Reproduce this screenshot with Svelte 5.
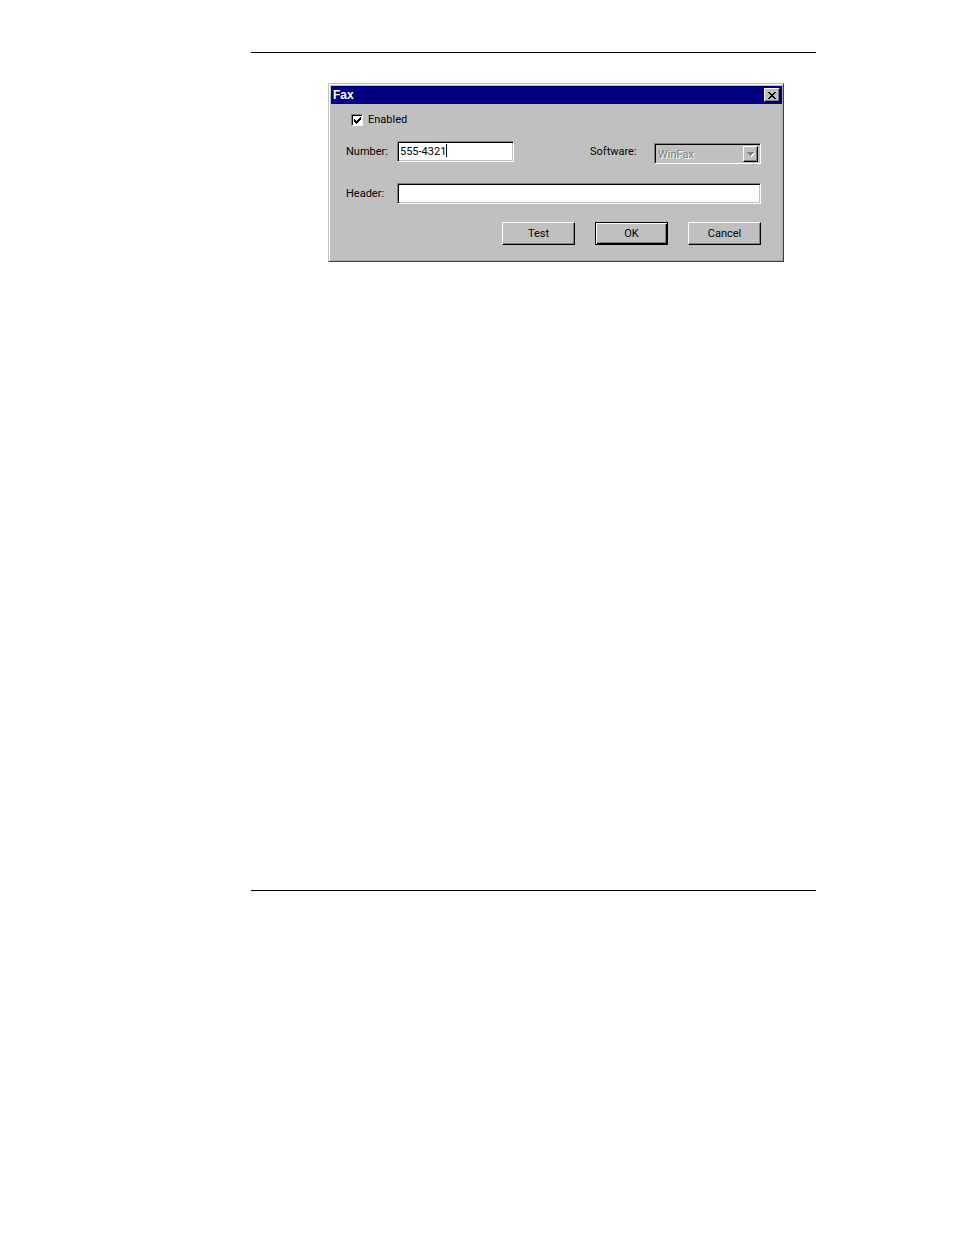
<script>
  let enabled = $state(true);
  let number = $state('555-4321');
  let software = $state('WinFax');
  let header = $state('');
</script>

<main class="sheet">
  <form class="dialog" aria-labelledby="dialog-title" onsubmit={(e) => e.preventDefault()}>
    <header class="titlebar">
      <h1 id="dialog-title">Fax</h1>
      <button type="button" class="close" aria-label="Close">
        <svg width="8" height="7" viewBox="0 0 8 7" shape-rendering="crispEdges" aria-hidden="true">
          <path d="M0 0h2v1h1v1h2v-1h1v-1h2v1h-1v1h-1v1h-1v1h1v1h1v1h1v1h-2v-1h-1v-1h-2v1h-1v1h-2v-1h1v-1h1v-1h1v-1h-1v-1h-1v-1h-1z" />
        </svg>
      </button>
    </header>

    <div class="body">
      <label class="check">
        <span class="box">
          <input type="checkbox" bind:checked={enabled} />
          {#if enabled}
            <svg width="7" height="7" viewBox="0 0 7 7" shape-rendering="crispEdges" aria-hidden="true">
              <path d="M0 2h1v1h1v1h1v-1h1v-1h1v-1h1v-1h1v3h-1v1h-1v1h-1v1h-1v1h-1v-1h-1v-1h-1z" />
            </svg>
          {/if}
        </span>
        Enabled
      </label>

      <div class="row">
        <label class="name" for="number">Number:</label>
        <div class="well number">
          <input id="number" type="text" bind:value={number} />
          <span class="caret"></span>
        </div>
        <label class="software" for="software">Software:</label>
        <div class="well combo">
          <select id="software" bind:value={software} disabled>
            <option>WinFax</option>
          </select>
          <span class="drop">
            <svg width="8" height="5" viewBox="0 0 8 5" shape-rendering="crispEdges" aria-hidden="true">
              <path fill="#fff" d="M1 1h7v1h-1v1h-1v1h-1v1h-1v-1h-1v-1h-1v-1h-1z" />
              <path fill="#808080" d="M0 0h7v1h-1v1h-1v1h-1v1h-1v-1h-1v-1h-1v-1h-1z" />
            </svg>
          </span>
        </div>
      </div>

      <div class="row heading">
        <label class="name" for="header">Header:</label>
        <div class="well wide">
          <input id="header" type="text" bind:value={header} />
        </div>
      </div>

      <div class="actions">
        <button type="button">Test</button>
        <button type="submit" class="default">OK</button>
        <button type="button">Cancel</button>
      </div>
    </div>
  </form>
</main>

<style>
  :global(body) {
    margin: 0;
    background: #fff;
  }

  .sheet,
  .sheet * {
    box-sizing: border-box;
  }

  .sheet {
    margin: 52px 138px 0 251px;
    min-height: 839px;
    padding: 30px 32px 30px 77px;
    border-top: 1px solid #000;
    border-bottom: 1px solid #000;
    font: 11px/16px Roboto, sans-serif;
    color: #000;
  }

  .dialog {
    border: 1px solid;
    border-color: #c0c0c0 #404040 #404040 #c0c0c0;
    box-shadow: inset 1px 1px #fff, inset -1px -1px #a8a8a8;
    padding: 2px 1px 2px 2px;
    background: #c0c0c0;
  }

  .titlebar {
    display: flex;
    align-items: center;
    justify-content: space-between;
    height: 18px;
    padding: 0 2px;
    background: #000080;
    color: #fff;
  }

  h1 {
    margin: 0;
    font: bold 12px/16px 'Liberation Sans', sans-serif;
  }

  button,
  input,
  select {
    margin: 0;
    border: 0;
    border-radius: 0;
    outline: 0;
    padding: 0;
    font: inherit;
    color: inherit;
    appearance: none;
  }

  button {
    display: flex;
    align-items: center;
    justify-content: center;
    border: 1px solid;
    border-color: #fff #000 #000 #fff;
    box-shadow: inset -1px -1px #808080;
    background: #c0c0c0;
    color: #000;
  }

  .close {
    width: 16px;
    height: 14px;
  }

  .body {
    padding: 8px 21px 14px 15px;
  }

  .check {
    display: flex;
    align-items: center;
    gap: 5px;
    width: max-content;
    padding-left: 5px;
  }

  .box {
    display: grid;
    place-items: center;
  }

  .box > * {
    grid-area: 1 / 1;
  }

  .box svg {
    pointer-events: none;
  }

  .box input {
    width: 12px;
    height: 12px;
    border: 1px solid;
    border-color: #808080 #fff #fff #808080;
    box-shadow: inset 1px 1px #000;
    background: #fff;
  }

  .row {
    display: flex;
    align-items: flex-start;
    margin-top: 13px;
  }

  .name {
    flex: 0 0 51px;
    padding-top: 3px;
  }

  .well {
    display: flex;
    height: 21px;
    border: 1px solid;
    border-color: #808080 #fff #fff #808080;
    box-shadow: inset 1px 1px #000, inset -1px -1px #c0c0c0;
    background: #fff;
    padding: 2px;
  }

  .well input {
    background: transparent;
    height: 16px;
  }

  .number {
    flex: 0 1 117px;
  }

  .number input {
    field-sizing: content;
    min-width: 10px;
  }

  .caret {
    width: 1px;
    height: 13px;
    background: #000;
  }

  .software {
    margin-left: auto;
    flex: 0 0 64px;
    padding-top: 3px;
  }

  .combo {
    flex: 0 0 107px;
    margin-top: 2px;
    background: #c0c0c0;
  }

  .combo select {
    flex: 1;
    min-width: 0;
    padding: 1px 0 0 1px;
    background: transparent;
    color: #808080;
    opacity: 1;
    text-shadow: 1px 1px #fff;
  }

  .drop {
    display: grid;
    place-items: center;
    width: 15px;
    height: 16px;
    border: 1px solid;
    border-color: #fff #000 #000 #fff;
    box-shadow: inset -1px -1px #808080;
  }

  .heading {
    margin-top: 19px;
  }

  .wide {
    flex: 1;
  }

  .wide input {
    width: 100%;
  }

  .actions {
    display: flex;
    justify-content: flex-end;
    gap: 20px;
    margin-top: 18px;
  }

  .actions button {
    width: 73px;
    height: 23px;
  }

  .actions .default {
    border-color: #000;
    box-shadow: inset 1px 1px #fff, inset -1px -1px #000, inset -2px -2px #808080;
  }
</style>
